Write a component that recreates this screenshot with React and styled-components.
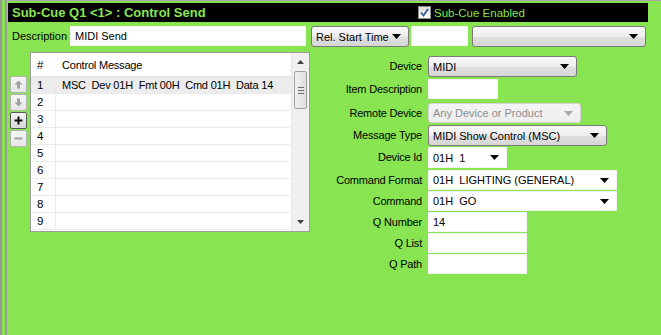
import React from "react";
import styled, { createGlobalStyle } from "styled-components";

const GREEN = "#89e452";

const GlobalStyle = createGlobalStyle`
	html, body {
		margin: 0;
		padding: 0;
		background: #f0f0f0;
		overflow: hidden;
	}
	body {
		font-family: "Liberation Sans", Arial, sans-serif;
		font-size: 11px;
		color: #000;
	}
`;

const Frame = styled.div`
	width: 661px;
	height: 335px;
	box-sizing: border-box;
	border-top: 1px solid #a8a8a8;
	border-left: 7px double #9a9a9a;
	background: ${GREEN};
	display: flex;
	flex-direction: column;
	padding-left: 1px;
`;

const Header = styled.div`
	margin: 2px 13px 0 0;
	height: 19px;
	background: #000;
	display: flex;
	align-items: center;
	padding-left: 4px;
`;

const Title = styled.div`
	flex: 0 0 406px;
	color: ${GREEN};
	font-weight: bold;
	font-size: 13px;
`;

const CheckLabel = styled.label`
	display: flex;
	align-items: center;
	gap: 3px;
	color: ${GREEN};
	font-size: 11.5px;
`;

const CheckBox = styled.span`
	width: 11px;
	height: 11px;
	border: 1px solid #8f8f8f;
	background: linear-gradient(#dcdcdc, #ffffff);
	display: flex;
	align-items: center;
	justify-content: center;
`;

const DescRow = styled.div`
	margin-top: 4px;
	height: 20px;
	display: flex;
	align-items: stretch;
	padding-left: 4px;
`;

const RowLabel = styled.span`
	width: 58px;
	line-height: 20px;
	font-size: 11px;
`;

const TextBox = styled.div`
	width: ${(p) => p.w}px;
	height: ${(p) => p.h || 20}px;
	box-sizing: border-box;
	background: #fff;
	border: 1px solid #f4f4f4;
	padding-left: 4px;
	line-height: ${(p) => (p.h || 20) - 2}px;
	font-size: 11px;
	margin-left: ${(p) => p.ml || 0}px;
`;

const Select = styled.div`
	width: ${(p) => p.w}px;
	height: ${(p) => p.h || 21}px;
	box-sizing: border-box;
	margin-left: ${(p) => p.ml || 0}px;
	border: 1px solid ${(p) => (p.disabled ? "#d4d4d4" : "#7a7a7a")};
	border-radius: 3px;
	background: ${(p) =>
		p.disabled
			? "linear-gradient(#f4f4f4, #eeeeee)"
			: "linear-gradient(#f8f8f8, #eeeeee 50%, #e0e0e0 51%, #d6d6d6)"};
	color: ${(p) => (p.disabled ? "#8d8d8d" : "#000")};
	display: flex;
	align-items: center;
	justify-content: space-between;
	padding: 0 7px 0 4px;
	font-size: 11px;
	white-space: pre;
`;

const Combo = styled(Select)`
	border: 1px solid #f2f2f2;
	border-radius: 0;
	background: #fff;
	padding-left: 4px;
`;

const Arrow = ({ color = "#000" }) => (
	<svg width="9" height="5" viewBox="0 0 9 5">
		<path d="M0 0 H9 L4.5 5 Z" fill={color} />
	</svg>
);

const Body = styled.div`
	margin-top: 6px;
	display: flex;
	align-items: flex-start;
	padding-left: 2px;
`;

const ToolColumn = styled.div`
	margin-top: 24px;
	flex: 0 0 17px;
	display: flex;
	flex-direction: column;
	gap: 1px;
`;

const ToolButton = styled.div`
	width: 17px;
	height: 17px;
	box-sizing: border-box;
	border: 1px solid ${(p) => (p.active ? "#5a5a5a" : "#b4b4b4")};
	border-radius: 2px;
	background: ${(p) =>
		p.active ? "linear-gradient(#f4f4f4, #d8d8d8)" : "linear-gradient(#f6f6f6, #e6e6e6)"};
	display: flex;
	align-items: center;
	justify-content: center;
`;

const Table = styled.div`
	margin-left: 3px;
	width: 280px;
	min-width: 0;
	flex: 0 0 280px;
	height: 180px;
	box-sizing: border-box;
	border: 1px solid #9c9c9c;
	background: #fff;
	display: flex;
	overflow: hidden;
`;

const Grid = styled.div`
	flex: 1;
	min-width: 0;
	display: flex;
	flex-direction: column;
`;

const HeadRow = styled.div`
	height: 23px;
	display: flex;
	align-items: center;
	border-bottom: 1px solid #e6e6e6;
	font-size: 11.5px;
`;

const Row = styled.div`
	height: 16px;
	display: flex;
	align-items: center;
	border-bottom: 1px solid #ebebeb;
	background: ${(p) => (p.selected ? "#ececec" : "#fff")};
	font-size: 11.5px;
	white-space: pre;
	overflow: hidden;
`;

const NumCell = styled.span`
	flex: 0 0 25px;
	align-self: stretch;
	display: flex;
	align-items: center;
	padding-left: 6px;
	box-sizing: border-box;
	border-right: 1px solid ${(p) => (p.head ? "transparent" : "#ececec")};
`;

const MsgCell = styled.span`
	padding-left: 6px;
	font-size: 11px;
	letter-spacing: -0.2px;
`;

const ScrollBar = styled.div`
	flex: 0 0 17px;
	background: #f0f0f0;
	border-left: 1px solid #e6e6e6;
	display: flex;
	flex-direction: column;
	align-items: center;
`;

const ScrollArrow = styled.div`
	height: 18px;
	display: flex;
	align-items: center;
	justify-content: center;
`;

const Thumb = styled.div`
	width: 13px;
	height: 38px;
	box-sizing: border-box;
	border: 1px solid #a0a0a0;
	border-radius: 2px;
	background: linear-gradient(90deg, #f2f2f2, #dedede);
	display: flex;
	flex-direction: column;
	align-items: center;
	justify-content: center;
	gap: 2px;
`;

const Grip = styled.span`
	width: 6px;
	height: 1px;
	background: #6a6a6a;
`;

const Track = styled.div`
	flex: 1;
`;

const Form = styled.div`
	margin: 4px 0 0 10px;
	display: grid;
	grid-template-columns: 102px auto;
	grid-template-rows: 23px 24px 22px 22px 23px 21px 21px 21px 21px 21px;
	column-gap: 6px;
	align-items: start;
`;

const FieldLabel = styled.span`
	text-align: right;
	line-height: 20px;
	font-size: 11px;
	letter-spacing: -0.2px;
	white-space: nowrap;
`;

const MoveIcon = ({ down }) => (
	<svg width="9" height="9" viewBox="0 0 9 9">
		<path
			d={down ? "M4.5 8.5 L8.5 4.5 H6 V0.5 H3 V4.5 H0.5 Z" : "M4.5 0.5 L8.5 4.5 H6 V8.5 H3 V4.5 H0.5 Z"}
			fill="#a2a2a2"
		/>
	</svg>
);

const rows = ["1", "2", "3", "4", "5", "6", "7", "8", "9"];

export default function App() {
	return (
		<>
			<GlobalStyle />
			<Frame>
				<Header>
					<Title>Sub-Cue Q1 &lt;1&gt; : Control Send</Title>
					<CheckLabel>
						<CheckBox>
							<svg width="9" height="9" viewBox="0 0 9 9">
								<path d="M1 4.5 L3.5 7.5 L8 1" stroke="#3a5a9a" strokeWidth="1.8" fill="none" />
							</svg>
						</CheckBox>
						Sub-Cue Enabled
					</CheckLabel>
				</Header>

				<DescRow>
					<RowLabel>Description</RowLabel>
					<TextBox w={236}>MIDI Send</TextBox>
					<Select w={98} ml={5}>
						Rel. Start Time <Arrow />
					</Select>
					<TextBox w={57} ml={2} />
					<Select w={174} ml={4}>
						<span />
						<Arrow />
					</Select>
				</DescRow>

				<Body>
					<ToolColumn>
						<ToolButton>
							<MoveIcon />
						</ToolButton>
						<ToolButton>
							<MoveIcon down />
						</ToolButton>
						<ToolButton active>
							<svg width="9" height="9" viewBox="0 0 9 9">
								<path d="M3.5 0.5 H5.5 V3.5 H8.5 V5.5 H5.5 V8.5 H3.5 V5.5 H0.5 V3.5 H3.5 Z" fill="#111" />
							</svg>
						</ToolButton>
						<ToolButton>
							<svg width="9" height="9" viewBox="0 0 9 9">
								<rect x="0.5" y="3.5" width="8" height="2" fill="#a2a2a2" />
							</svg>
						</ToolButton>
					</ToolColumn>

					<Table>
						<Grid>
							<HeadRow>
								<NumCell head>#</NumCell>
								<MsgCell>Control Message</MsgCell>
							</HeadRow>
							{rows.map((n) => (
								<Row key={n} selected={n === "1"}>
									<NumCell>{n}</NumCell>
									{n === "1" && <MsgCell>MSC  Dev 01H  Fmt 00H  Cmd 01H  Data 14</MsgCell>}
								</Row>
							))}
						</Grid>
						<ScrollBar>
							<ScrollArrow>
								<svg width="7" height="4" viewBox="0 0 7 4">
									<path d="M0 4 L3.5 0 L7 4 Z" fill="#404040" />
								</svg>
							</ScrollArrow>
							<Thumb>
								<Grip />
								<Grip />
								<Grip />
							</Thumb>
							<Track />
							<ScrollArrow>
								<svg width="7" height="4" viewBox="0 0 7 4">
									<path d="M0 0 L7 0 L3.5 4 Z" fill="#404040" />
								</svg>
							</ScrollArrow>
						</ScrollBar>
					</Table>

					<Form>
						<FieldLabel>Device</FieldLabel>
						<Select w={149}>
							MIDI <Arrow />
						</Select>

						<FieldLabel>Item Description</FieldLabel>
						<TextBox w={70} />

						<FieldLabel>Remote Device</FieldLabel>
						<Select w={153} h={20} disabled>
							Any Device or Product <Arrow color="#a8a8a8" />
						</Select>

						<FieldLabel>Message Type</FieldLabel>
						<Select w={179}>
							MIDI Show Control (MSC) <Arrow />
						</Select>

						<FieldLabel>Device Id</FieldLabel>
						<Combo w={79}>
							01H  1 <Arrow />
						</Combo>

						<FieldLabel>Command Format</FieldLabel>
						<Combo w={189} h={20}>
							01H  LIGHTING (GENERAL) <Arrow />
						</Combo>

						<FieldLabel>Command</FieldLabel>
						<Combo w={189} h={20}>
							01H  GO <Arrow />
						</Combo>

						<FieldLabel>Q Number</FieldLabel>
						<TextBox w={99}>14</TextBox>

						<FieldLabel>Q List</FieldLabel>
						<TextBox w={99} />

						<FieldLabel>Q Path</FieldLabel>
						<TextBox w={99} />
					</Form>
				</Body>
			</Frame>
		</>
	);
}
